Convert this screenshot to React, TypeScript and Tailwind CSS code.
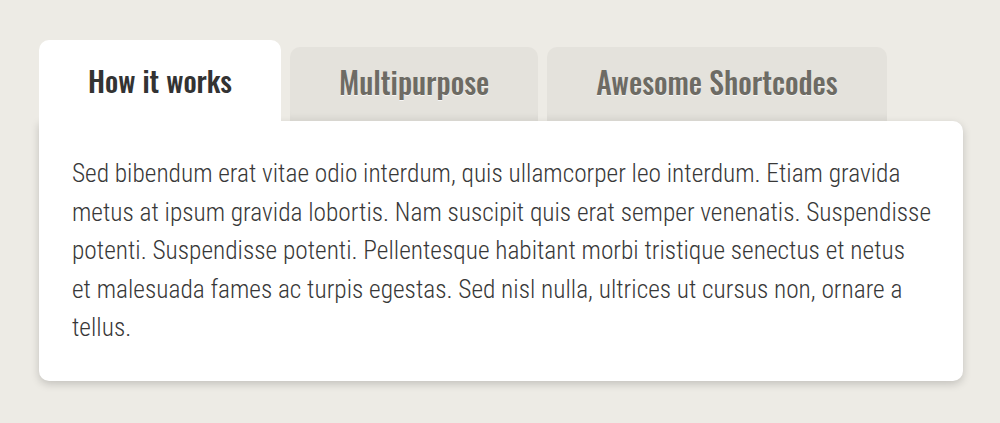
const tabs = ["How it works", "Multipurpose", "Awesome Shortcodes"];

const App = () => {
  const active = 0;
  return (
    <div className="min-h-[423px] w-full bg-[#edebe5] pl-[39px] pr-[37px] pt-[40px]">
      <div className="flex items-end gap-[9px]">
        {tabs.map((t, i) =>
          i === active ? (
            <div
              key={t}
              className="h-[81px] rounded-t-[10px] bg-white px-[49px] pt-[20px] font-['Oswald',sans-serif] text-[29px] font-medium leading-[40px] text-[#333333]"
            >
              {t}
            </div>
          ) : (
            <div
              key={t}
              className="h-[74px] rounded-t-[10px] bg-[#e4e2dc] px-[49px] pt-[15px] font-['Oswald',sans-serif] text-[29.7px] font-medium leading-[40px] text-[#6d6b64] text-shadow-[0_1px_0_rgba(255,255,255,0.7)] shadow-[inset_0_-8px_6px_-5px_rgba(0,0,0,0.07)]"
            >
              {t}
            </div>
          )
        )}
      </div>
      <div className="rounded-b-[10px] rounded-tr-[10px] bg-white pl-[33px] pr-[32px] pt-[33px] pb-[34px] shadow-[0_3px_8px_rgba(0,0,0,0.18)]">
        <p className="font-['Roboto_Condensed',sans-serif] text-[25.35px] font-light leading-[38.5px] text-[#383838]">
          Sed bibendum erat vitae odio interdum, quis ullamcorper leo interdum. Etiam gravida metus at ipsum gravida
          lobortis. Nam suscipit quis erat semper venenatis. Suspendisse potenti. Suspendisse potenti. Pellentesque
          habitant morbi tristique senectus et netus et{"\u00a0"}malesuada fames ac turpis egestas. Sed nisl nulla,
          ultrices ut cursus non, ornare a tellus.
        </p>
      </div>
    </div>
  );
};

export default App;
